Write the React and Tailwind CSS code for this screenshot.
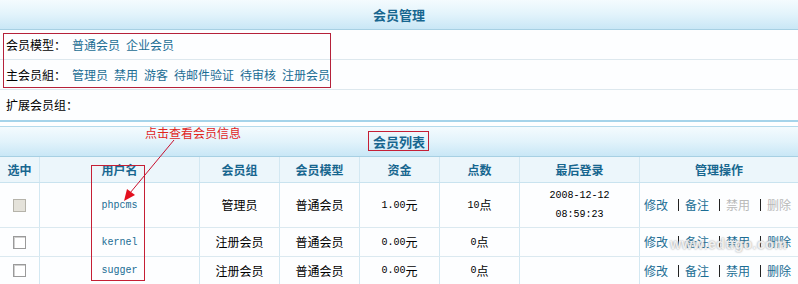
import React from "react";

const CJK = "font-['Noto_Sans_CJK_SC','Noto_Sans',sans-serif]";
const MONO = "font-['Liberation_Mono','Noto_Sans_CJK_SC',monospace]";
const LINK = "text-[#1b6d94]";

function TitleBar({ children }) {
  return (
    <div className="h-[30px] flex items-center justify-center bg-gradient-to-b from-[#f4fbfe] via-[#e2f3fb] to-[#c9e7f6] border-b border-[#a7d0e3] font-bold text-[13px] text-[#17668f]">
      {children}
    </div>
  );
}

function Checkbox({ disabled }) {
  return (
    <span
      className={
        "inline-block w-[13px] h-[13px] border " +
        (disabled
          ? "border-[#b5b3aa] bg-[#e4e2da]"
          : "border-[#9a9a9a] bg-white shadow-[inset_1px_1px_0_#d0d0d0]")
      }
    />
  );
}

function Sep() {
  return <span className="inline-block w-[1px] h-[12px] bg-[#222] ml-[10px] mr-[6px]" />;
}

function Actions({ dim }) {
  const c2 = dim ? "text-[#b9b9b9]" : LINK;
  return (
    <div className="flex items-center pl-[4px]">
      <span className={LINK}>修改</span>
      <Sep />
      <span className={LINK}>备注</span>
      <Sep />
      <span className={c2}>禁用</span>
      <Sep />
      <span className={c2}>删除</span>
    </div>
  );
}

const cols = "grid grid-cols-[40px_160px_80px_80px_80px_80px_120px_158px]";
const cell = "flex items-center justify-center border-r border-[#d3e8f2]";

const rows = [
  { user: "phpcms", group: "管理员", model: "普通会员", money: "1.00", pts: "10", date: ["2008-12-12", "08:59:23"], h: "h-[45px]", dis: true },
  { user: "kernel", group: "注册会员", model: "普通会员", money: "0.00", pts: "0", date: null, h: "h-[29px]", dis: false },
  { user: "sugger", group: "注册会员", model: "普通会员", money: "0.00", pts: "0", date: null, h: "h-[28px]", dis: false },
];

export default function App() {
  return (
    <div className={"relative w-[798px] h-[284px] overflow-hidden bg-white text-[12px] text-black " + CJK}>
      {/* block 1 */}
      <div className="border-b-2 border-[#a6d4ea]">
        <TitleBar>会员管理</TitleBar>
        <div className="h-[30px] flex items-center pl-[6px] border-b border-[#dde8ee] bg-[#fdfeff]">
          <span>会员模型：</span>
          <span className={LINK + " ml-[6px]"}>普通会员</span>
          <span className={LINK + " ml-[6px]"}>企业会员</span>
        </div>
        <div className="h-[30px] flex items-center pl-[6px] border-b border-[#dde8ee] bg-[#fdfeff]">
          <span>主会员組：</span>
          {["管理员", "禁用", "游客", "待邮件验证", "待审核", "注册会员"].map((t) => (
            <span key={t} className={LINK + " ml-[6px]"}>{t}</span>
          ))}
        </div>
        <div className="h-[30px] flex items-center pl-[6px] bg-[#fdfeff]">
          <span>扩展会员组：</span>
        </div>
      </div>

      {/* block 2 */}
      <div className="mt-[4px] border-t border-[#b5dbec]">
        <TitleBar>会员列表</TitleBar>
        <div className={cols + " h-[26px] bg-[#ecf6fb] border-b border-[#c9e3ef] font-bold text-[#17668f]"}>
          {["选中", "用户名", "会员组", "会员模型", "资金", "点数", "最后登录", "管理操作"].map((t, i) => (
            <div key={t} className={cell + (i === 7 ? " border-r-0" : "")}>{t}</div>
          ))}
        </div>
        {rows.map((r) => (
          <div key={r.user} className={cols + " " + r.h + " border-b border-[#dbe9f0] bg-[#fdfeff]"}>
            <div className={cell}><Checkbox disabled={r.dis} /></div>
            <div className={cell}>
              <span className={MONO + " text-[10px] " + LINK}>{r.user}</span>
            </div>
            <div className={cell}>{r.group}</div>
            <div className={cell}>{r.model}</div>
            <div className={cell}>
              <span className={MONO + " text-[10px]"}>{r.money}</span>
              <span>元</span>
            </div>
            <div className={cell}>
              <span className={MONO + " text-[10px]"}>{r.pts}</span>
              <span>点</span>
            </div>
            <div className={cell + " flex-col gap-[4px]"}>
              {r.date && (
                <>
                  <span className={MONO + " text-[10px] leading-[15px]"}>{r.date[0]}</span>
                  <span className={MONO + " text-[10px] leading-[15px]"}>{r.date[1]}</span>
                </>
              )}
            </div>
            <div className="flex items-center">
              <Actions dim={r.dis} />
            </div>
          </div>
        ))}
      </div>

      {/* annotations */}
      <div className="absolute left-[3px] top-[33px] w-[328px] h-[55px] border border-[#b5213a]" />
      <div className="absolute left-[368px] top-[131px] w-[61px] h-[20px] border border-[#c51f35]" />
      <div className="absolute left-[91px] top-[165px] w-[54px] h-[116px] border border-[#c51f35]" />
      <div className="absolute left-[145px] top-[125px] text-[12px] leading-[16px] text-[#e0251c]">点击查看会员信息</div>
      <svg className="absolute left-0 top-0" width="798" height="284" viewBox="0 0 798 284">
        <line x1="174" y1="140" x2="130" y2="193" stroke="#c8102e" strokeWidth="1" />
        <polygon points="124,201 127,189 135,195" fill="#e3101f" />
      </svg>
      <div className="absolute left-[670px] top-[236px] text-[14px] leading-[16px] font-bold text-white/80 tracking-[0.5px] [text-shadow:0_0_2px_#8a8a8a] font-['Liberation_Sans',sans-serif]">
        www.edugo.com
      </div>
    </div>
  );
}
